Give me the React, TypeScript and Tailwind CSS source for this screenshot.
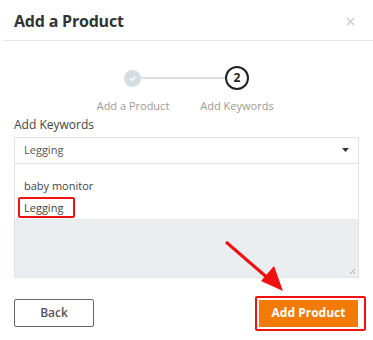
import React from 'react'

export default function App() {
  return (
    <div className="relative h-[340px] w-[373px] overflow-hidden bg-white font-['Open_Sans',sans-serif] text-[#333]">
      <header className="ml-[3px] flex h-[41px] items-center justify-between border-b border-[#e6e6e6] pl-[11px] pr-[18px] pt-[2px]">
        <h1 className="text-[16px] font-bold tracking-[-0.2px] text-[#333]">Add a Product</h1>
        <svg width="9" height="9" viewBox="0 0 9 9" className="text-[#c8c8c8]">
          <path d="M1 1L8 8M8 1L1 8" stroke="currentColor" strokeWidth="1.2" />
        </svg>
      </header>

      <div className="mt-[25px] flex items-center pl-[124px]">
        <div className="flex h-[17px] w-[17px] items-center justify-center rounded-full bg-[#d3dde2]">
          <svg width="9" height="9" viewBox="0 0 10 10">
            <path d="M2 5.2L4.2 7.3L8 2.8" stroke="#fff" strokeWidth="1.4" fill="none" />
          </svg>
        </div>
        <div className="h-[2px] w-[84px] bg-[#d8e0e4]" />
        <div className="flex h-[24px] w-[24px] items-center justify-center rounded-full border-2 border-[#222] text-[12px] font-bold text-[#222]">
          2
        </div>
      </div>
      <div className="mt-[8px] flex gap-[24px] pl-[93px] text-[11px] text-[#9a9a9a]">
        <div className="w-[80px] whitespace-nowrap text-center">Add a Product</div>
        <div className="w-[80px] whitespace-nowrap text-center">Add Keywords</div>
      </div>

      <div className="mx-[14px] mt-[1px]">
        <div className="text-[12px] text-[#444]">Add Keywords</div>
        <div className="mt-[3px] flex h-[27px] items-center justify-between border border-[#dde3e6] pl-[9px] pr-[9px] text-[11px] text-[#555]">
          <span>Legging</span>
          <svg width="7" height="4" viewBox="0 0 7 4">
            <path d="M0 0H7L3.5 4Z" fill="#333" />
          </svg>
        </div>
        <div className="relative h-[114px] border border-t-0 border-[#dde3e6] bg-[#ebeef0]">
          <div className="flex h-[55px] flex-col justify-end bg-white pb-[1px] pl-[3px] text-[11px] text-[#444]">
            <div className="pl-[6px] leading-[22px]">baby monitor</div>
            <div className="w-[57px] rounded-[2px] border-2 border-[#ee1111] pl-[4px] leading-[17px]">Legging</div>
          </div>
          <svg width="8" height="8" viewBox="0 0 8 8" className="absolute bottom-[2px] right-[2px]">
            <path d="M7 2L2 7M7 5L5 7" stroke="#999" strokeWidth="0.8" />
          </svg>
        </div>
      </div>

      <div className="mx-[14px] mt-[18px] flex items-center justify-between">
        <button className="flex h-[28px] w-[80px] items-center justify-center rounded-[2px] border-[1.5px] border-[#666] text-[12px] font-semibold text-[#555]">
          Back
        </button>
        <div className="-mr-[7px] rounded-[2px] border-[2px] border-[#ee1111] p-[2px] pr-[6px]">
          <button className="flex h-[27px] w-[99px] items-center justify-center bg-[#f47a06] text-[12px] font-bold text-white">
            Add Product
          </button>
        </div>
      </div>
      <div className="ml-[3px] mt-[9px] h-px bg-[#e6e6e6]" />

      <svg width="373" height="340" className="pointer-events-none absolute left-0 top-0">
        <path d="M226 242L270 280" stroke="#f01010" strokeWidth="3" />
        <path d="M283 291L261 281L274 266Z" fill="#f01010" />
      </svg>
    </div>
  )
}
